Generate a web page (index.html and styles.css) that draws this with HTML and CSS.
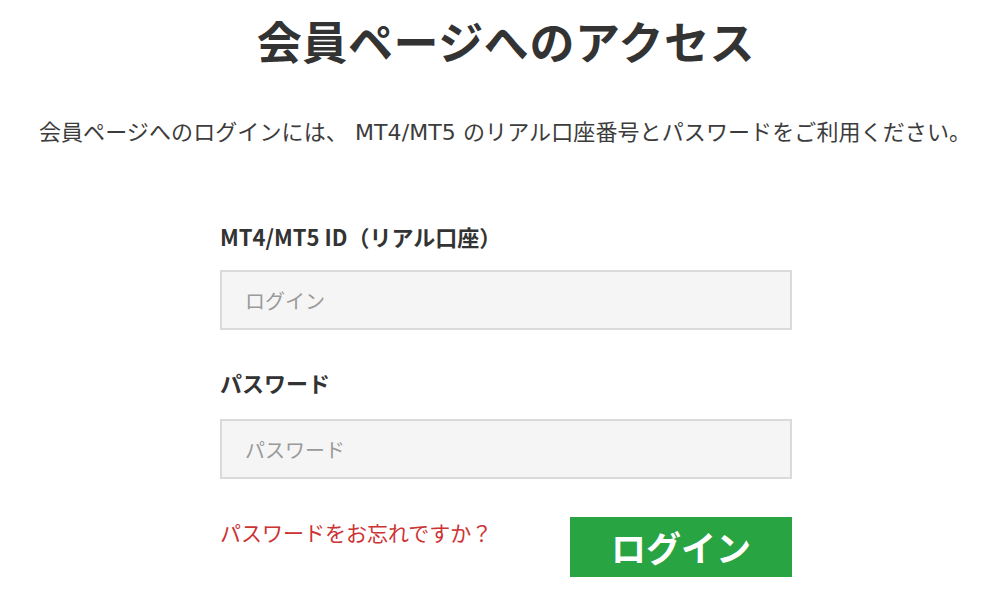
FILE: index.html
```html
<!DOCTYPE html>
<html lang="ja">
<head>
<meta charset="utf-8">
<title>会員ページへのアクセス</title>
<link rel="stylesheet" href="styles.css">
</head>
<body>
<main class="page">
  <h1 class="title">会員ページへのアクセス</h1>
  <p class="lead">会員ページへのログインには、 MT4/MT5 のリアル口座番号とパスワードをご利用ください。</p>
  <form class="login-form">
    <label class="field-label field-label-id" for="login">MT4/MT5 ID（リアル口座）</label>
    <input class="field-input" id="login" type="text" placeholder="ログイン">
    <label class="field-label field-label-pw" for="password">パスワード</label>
    <input class="field-input field-input-pw" id="password" type="password" placeholder="パスワード">
    <div class="form-actions">
      <a class="forgot-link" href="#">パスワードをお忘れですか？</a>
      <button class="login-button" type="button">ログイン</button>
    </div>
  </form>
</main>
</body>
</html>
```

FILE: styles.css
```css
html, body {
  margin: 0;
  padding: 0;
  background: #ffffff;
}

body {
  font-family: "Noto Sans CJK JP", sans-serif;
  color: #333333;
}

.page {
  display: flex;
  flex-direction: column;
  align-items: center;
}

.title {
  margin: 14px 0 0 12px;
  font-size: 45px;
  line-height: 54px;
  font-weight: 700;
  color: #333333;
  letter-spacing: 0.6px;
}

.lead {
  margin: 50px 0 0 10px;
  font-family: "DejaVu Sans", "Noto Sans CJK JP", sans-serif;
  font-size: 22px;
  line-height: 30px;
  color: #3c3c3c;
  letter-spacing: 0.1px;
  white-space: nowrap;
}

.login-form {
  display: flex;
  flex-direction: column;
  width: 572px;
  margin: 73px 0 0 12px;
}

.field-label {
  font-size: 22px;
  line-height: 30px;
  font-weight: 700;
  color: #333333;
}

.field-input {
  box-sizing: border-box;
  height: 60px;
  margin-top: 19px;
  padding: 0 0 0 23px;
  border: 2px solid #dadada;
  background: #f5f5f5;
  font-family: "Noto Sans CJK JP", sans-serif;
  font-size: 20px;
  color: #333333;
  outline: none;
}

.field-input::placeholder {
  color: #9a9a9a;
}

.field-label-pw {
  margin-top: 37px;
}

.field-input-pw {
  margin-top: 22px;
}

.form-actions {
  display: flex;
  justify-content: space-between;
  align-items: flex-start;
  margin-top: 38px;
}

.forgot-link {
  font-size: 21px;
  line-height: 30px;
  color: #cc3333;
  text-decoration: none;
}

.login-button {
  width: 222px;
  height: 60px;
  border: none;
  background: #28a443;
  color: #ffffff;
  font-family: "Noto Sans CJK JP", sans-serif;
  font-size: 35px;
  font-weight: 700;
  line-height: 60px;
  padding: 0;
  cursor: pointer;
}
```
